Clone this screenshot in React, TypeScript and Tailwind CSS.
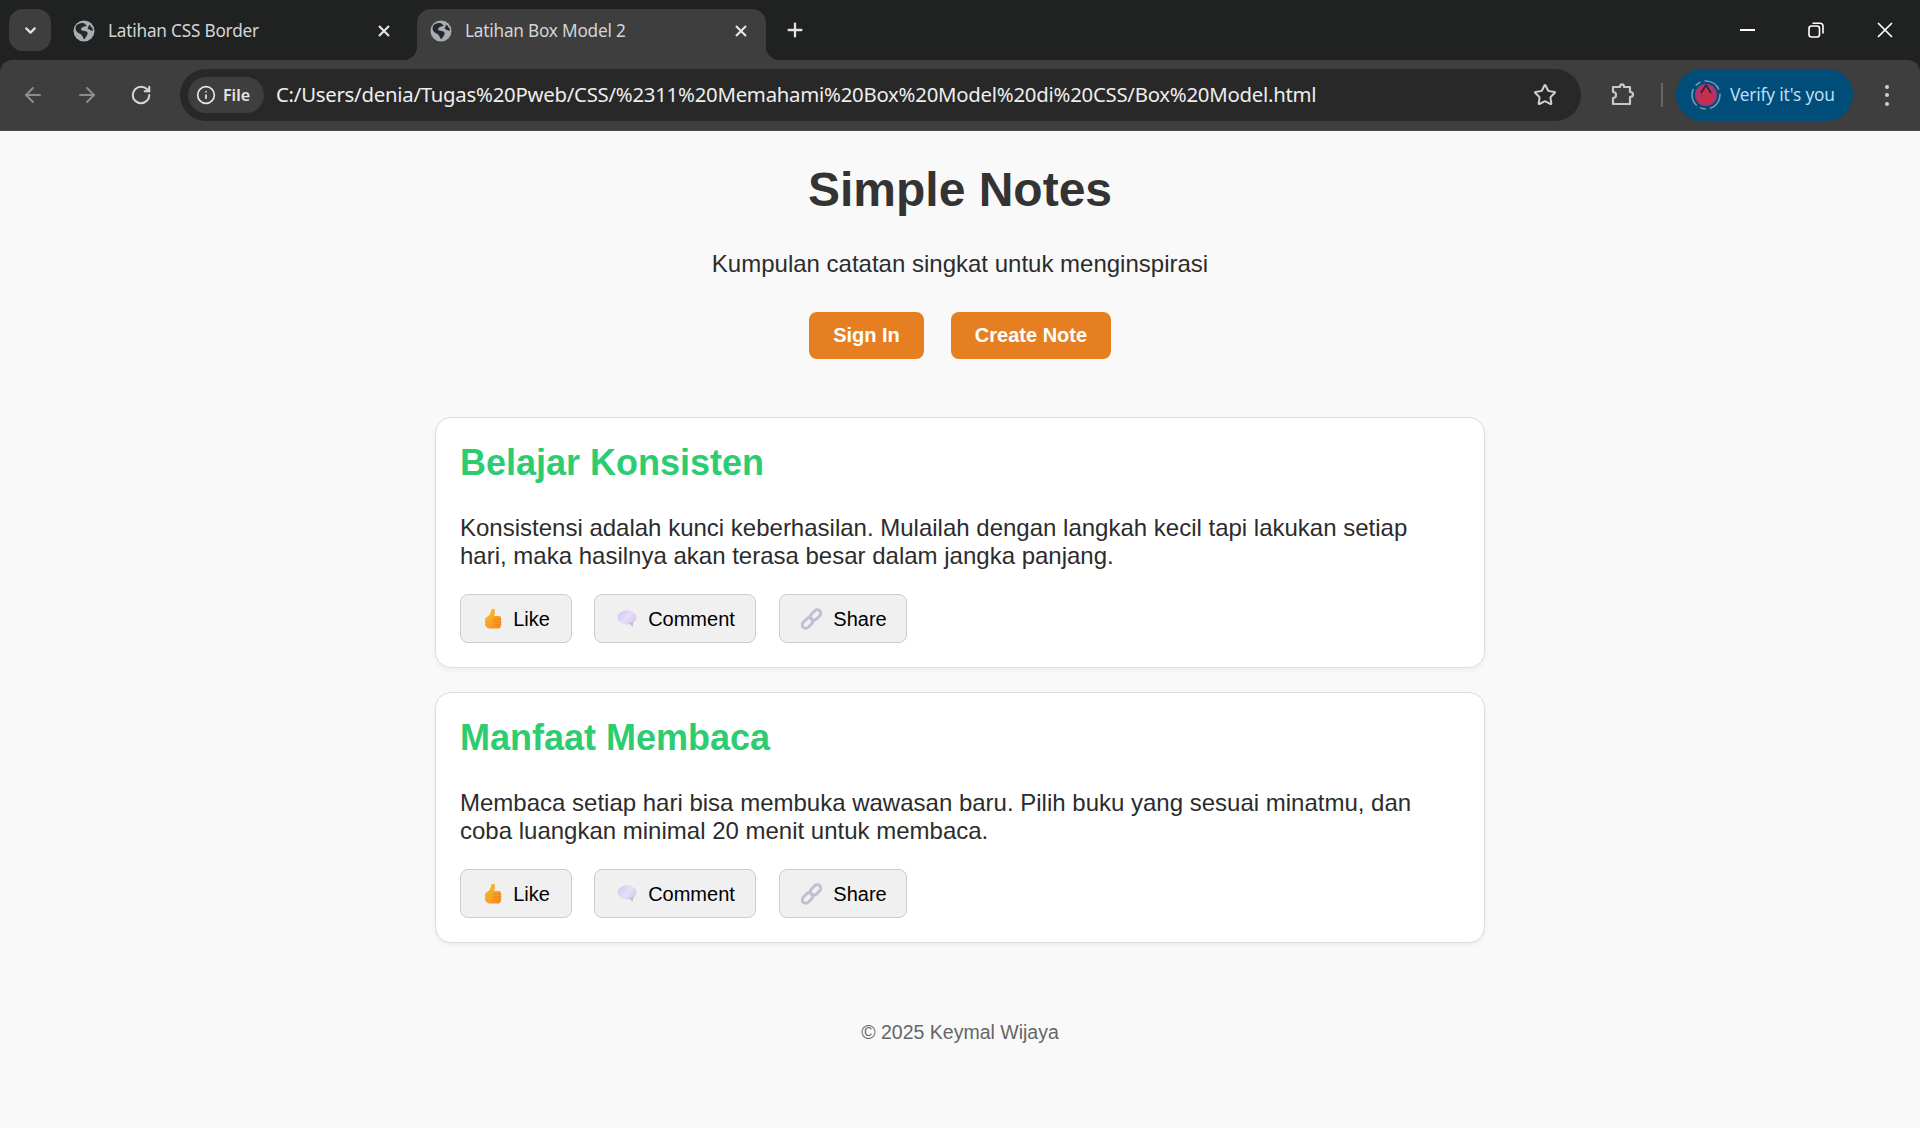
import { ArrowLeft, ArrowRight, ChevronDown, Info, Plus, RotateCw, Star } from "lucide-react";

const chromeFont = "font-['Noto_Sans',sans-serif]";

function GlobeIcon() {
  return (
    <svg width="22" height="22" viewBox="0 0 22 22" className="shrink-0">
      <circle cx="11" cy="11" r="10.5" fill="#a9adb1" />
      <path
        d="M3 6 C5.5 3 9 2.5 11.5 3.5 L14 6 C11.5 6 8.5 7 8 9 C8 11 11 10.5 13.5 11.5 C15.5 12.5 14.5 15 13 17 L11 19.5 C10 17 9 14.5 6.5 13.5 C4.5 12.5 3 11 2.5 9 Z M16.5 4.5 L19.5 8.5 L20 11 L17 10 L14.5 8.5 Z"
        fill="#25282a"
      />
    </svg>
  );
}

function Tab({ title, active }: { title: string; active?: boolean }) {
  return (
    <div
      className={`relative flex h-[51px] w-[349px] shrink-0 items-center rounded-t-[14px] pb-[7px] pl-[13px] pr-[12px] ${
        active ? "bg-[#3e3e3e]" : ""
      }`}
    >
      {active && (
        <>
          <span className="absolute bottom-0 left-[-14px] h-[14px] w-[14px] bg-[radial-gradient(circle_at_0_0,transparent_14px,#3e3e3e_14.5px)]" />
          <span className="absolute bottom-0 right-[-14px] h-[14px] w-[14px] bg-[radial-gradient(circle_at_100%_0,transparent_14px,#3e3e3e_14.5px)]" />
        </>
      )}
      <GlobeIcon />
      <span className="ml-[13px] flex-1 truncate text-[17.2px] tracking-[-0.2px] text-[#d3d5d6]">{title}</span>
      <svg width="14" height="14" viewBox="0 0 14 14" stroke="#e3e3e3" strokeWidth="2.2" className="mr-[6px]">
        <path d="M2 2 L12 12 M12 2 L2 12" />
      </svg>
    </div>
  );
}

function ThumbIcon() {
  return (
    <svg width="18" height="22" viewBox="0 0 18 22">
      <defs>
        <linearGradient id="thumbFill" x1="0" y1="0" x2="1" y2="1">
          <stop offset="0" stopColor="#fdc02f" />
          <stop offset="1" stopColor="#f28a1c" />
        </linearGradient>
      </defs>
      <path
        d="M1 11.5 C1 9.5 3 9 4.5 8 C6.5 6 7 3.5 7.5 1.5 C8.5 .2 11 .5 11 3 C11 5 10.5 6.5 10 8 L15.5 8 C18 8 18 20.5 15 20.5 L7 20.5 C3 20.5 1 19 1 15.5 Z"
        fill="url(#thumbFill)"
      />
      <path d="M10 11 H16.5 M10 14 H16.5 M10 17 H16" stroke="#e8831a" strokeWidth="1.1" strokeLinecap="round" />
    </svg>
  );
}

function BubbleIcon() {
  return (
    <svg width="20" height="18" viewBox="0 0 20 18">
      <defs>
        <linearGradient id="bubbleFill" x1="0" y1="0" x2="1" y2="0.6">
          <stop offset="0" stopColor="#cfc3ee" />
          <stop offset="0.6" stopColor="#e6dff6" />
          <stop offset="1" stopColor="#d6ccec" />
        </linearGradient>
      </defs>
      <ellipse cx="10" cy="7.5" rx="9.6" ry="7.2" fill="url(#bubbleFill)" />
      <path d="M12 13 L15.5 17 L16.5 11.5 Z" fill="#c8bbe4" />
    </svg>
  );
}

function LinkIcon() {
  return (
    <svg width="21" height="22" viewBox="0 0 21 22" fill="none" stroke="#c6bbd6" strokeWidth="3">
      <rect x="0.5" y="11.5" width="12" height="7" rx="3.5" transform="rotate(-45 6.5 15)" />
      <rect x="8.5" y="3.5" width="12" height="7" rx="3.5" transform="rotate(-45 14.5 7)" />
    </svg>
  );
}

function ActionButton({ icon, label, className }: { icon: React.ReactNode; label: string; className: string }) {
  return (
    <button
      className={`flex h-[49px] items-center justify-center gap-[11px] rounded-[8px] border border-[#cccccc] bg-[#f0f0f0] pl-[2px] pt-[1px] text-[20px] text-black ${className}`}
    >
      {icon}
      {label}
    </button>
  );
}

function NoteCard({ title, children }: { title: string; children: React.ReactNode }) {
  return (
    <div className="h-[251px] w-[1050px] rounded-[16px] border border-[#dddddd] bg-white pl-[24px] pr-[24px] pt-[23px] shadow-[0_2px_5px_rgba(0,0,0,0.05)]">
      <h2 className="text-[36px] font-bold leading-[44px] text-[#2ecc71]">{title}</h2>
      <p className="mt-[29px] text-[24px] leading-[28px] text-[#2c2c2c]">{children}</p>
      <div className="mt-[24px] flex">
        <ActionButton icon={<ThumbIcon />} label="Like" className="w-[112px]" />
        <ActionButton icon={<BubbleIcon />} label="Comment" className="ml-[22px] w-[162px]" />
        <ActionButton icon={<LinkIcon />} label="Share" className="ml-[23px] w-[128px]" />
      </div>
    </div>
  );
}

export default function App() {
  return (
    <div className="flex min-h-[1128px] flex-col bg-[#f9f9f9] font-['Liberation_Sans',sans-serif]">
      {/* Browser chrome */}
      <div className={`bg-[#202221] ${chromeFont}`}>
        <div className="flex h-[60px] items-end pl-[9px]">
          <div className="mb-[9px] flex h-[42px] w-[42px] items-center justify-center rounded-[14px] bg-[#3e3e3e]">
            <ChevronDown size={17} strokeWidth={3} className="text-[#e3e3e3]" />
          </div>
          <div className="ml-[9px] w-[357px] shrink-0">
            <Tab title="Latihan CSS Border" />
          </div>
          <Tab title="Latihan Box Model 2" active />
          <Plus size={22} strokeWidth={2.5} className="mb-[19px] ml-[18px] text-[#e3e3e3]" />
          <div className="mb-[15px] ml-auto flex h-[30px] items-center gap-[53px] pr-[27px] text-white">
            <span className="h-[2px] w-[15px] bg-white" />
            <svg width="16" height="16" viewBox="0 0 16 16" fill="none" stroke="currentColor" strokeWidth="1.6">
              <rect x="1" y="4" width="10.5" height="11" rx="2.5" />
              <path d="M4.5 1.2 H12 A3 3 0 0 1 15 4.2 V11.5" />
            </svg>
            <svg width="16" height="16" viewBox="0 0 16 16" stroke="currentColor" strokeWidth="1.7">
              <path d="M1 1 L15 15 M15 1 L1 15" />
            </svg>
          </div>
        </div>
        <div className="flex h-[71px] items-center rounded-t-[12px] border-b border-[#4a4a4a] bg-[#3e3e3e] pl-[21px] pr-[22px]">
          <ArrowLeft size={24} className="text-[#8c8c8c]" />
          <ArrowRight size={24} className="ml-[30px] text-[#8c8c8c]" />
          <RotateCw size={22} strokeWidth={2.2} className="ml-[31px] text-[#d6d6d6]" />
          <div className="ml-[28px] flex h-[52px] w-[1401px] items-center rounded-full bg-[#282828] pl-[8px] pr-[24px]">
            <div className="flex h-[36px] w-[76px] items-center gap-[7px] rounded-full bg-[#3e3e3e] pl-[8px] text-[16px] font-semibold text-[#e6e6e6]">
              <Info size={20} />
              File
            </div>
            <span className="ml-[12px] flex-1 truncate pb-[1px] text-[20.35px] tracking-[-0.25px] text-[#eeeeee]">
              C:/Users/denia/Tugas%20Pweb/CSS/%2311%20Memahami%20Box%20Model%20di%20CSS/Box%20Model.html
            </span>
            <Star size={24} strokeWidth={2} className="text-[#cfcfcf]" />
          </div>
          <svg width="26" height="26" viewBox="0 0 26 26" fill="none" stroke="#c8c8c8" strokeWidth="2.2" className="ml-[29px]">
            <path d="M3 5 H10 C10 1.5 14 1.5 14 5 H20 V10 C24 10 24 15 20 15 V22 H3 V16 C7 16 7 10 3 10 Z" strokeLinejoin="round" />
          </svg>
          <span className="ml-[25px] h-[24px] w-[2px] bg-[#666666]" />
          <div className="ml-[13px] flex h-[52px] w-[177px] items-center rounded-full bg-[#004d7a] pl-[15px]">
            <svg width="30" height="30" viewBox="0 0 30 30">
              <circle cx="15" cy="15" r="14" fill="none" stroke="#7d9bb0" strokeWidth="1.5" strokeDasharray="18 4 6 4" />
              <circle cx="15" cy="15" r="11" fill="#b0336c" />
              <path d="M15 5 L10 13 M15 5 L20 13" fill="none" stroke="#2a2030" strokeWidth="1.5" />
              <path d="M15 9 L21.5 20 H8.5 Z M12 20 L15 14 L18 20" fill="none" stroke="#e02b2b" strokeWidth="1.3" />
            </svg>
            <span className="ml-[9px] text-[17.3px] tracking-[-0.2px] text-[#b9def5]">Verify it's you</span>
          </div>
          <div className="ml-[32px] flex flex-col gap-[4.5px]">
            <span className="h-[4px] w-[4px] rounded-full bg-[#d0d0d0]" />
            <span className="h-[4px] w-[4px] rounded-full bg-[#d0d0d0]" />
            <span className="h-[4px] w-[4px] rounded-full bg-[#d0d0d0]" />
          </div>
        </div>
      </div>

      {/* Page */}
      <div className="flex flex-col items-center">
        <h1 className="mt-[28px] text-[48px] font-bold leading-[62px] text-[#333333]">Simple Notes</h1>
        <p className="mt-[29px] text-[24px] leading-[28px] text-[#2c2c2c]">Kumpulan catatan singkat untuk menginspirasi</p>
        <div className="mt-[34px] flex gap-[27px]">
          <button className="h-[47px] w-[115px] rounded-[8px] bg-[#e67e22] pb-[2px] text-[20px] font-bold text-white">Sign In</button>
          <button className="h-[47px] w-[160px] rounded-[8px] bg-[#e67e22] pb-[2px] text-[20px] font-bold text-white">Create Note</button>
        </div>
        <div className="mt-[58px] flex flex-col gap-[24px]">
          <NoteCard title="Belajar Konsisten">
            Konsistensi adalah kunci keberhasilan. Mulailah dengan langkah kecil tapi lakukan setiap hari, maka hasilnya akan terasa besar dalam jangka panjang.
          </NoteCard>
          <NoteCard title="Manfaat Membaca">
            Membaca setiap hari bisa membuka wawasan baru. Pilih buku yang sesuai minatmu, dan coba luangkan minimal 20 menit untuk membaca.
          </NoteCard>
        </div>
        <p className="mt-[77px] text-[19.5px] leading-[24px] text-[#666666]">© 2025 Keymal Wijaya</p>
      </div>
    </div>
  );
}
